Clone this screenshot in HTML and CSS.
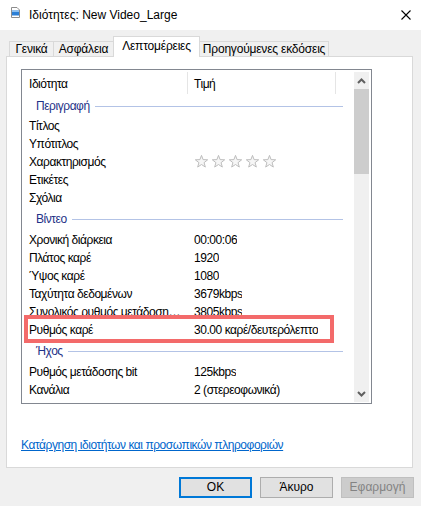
FILE: index.html
```html
<!DOCTYPE html>
<html lang="el">
<head>
<meta charset="utf-8">
<title>Ιδιότητες: New Video_Large</title>
<link rel="stylesheet" href="styles.css">
</head>
<body>
<svg class="defs" width="0" height="0">
  <defs>
    <symbol id="star" viewBox="0 0 13 13">
      <polygon points="6.5,0.4 8.09,4.62 12.68,4.79 9.07,7.63 10.32,12.06 6.5,9.5 2.68,12.06 3.93,7.63 0.32,4.79 4.91,4.62" fill="#f6f6f6" stroke="#bdbdbd" stroke-width="1" stroke-linejoin="round"/>
    </symbol>
  </defs>
</svg>
<div class="titlebar">
  <svg class="appicon" width="9" height="11" viewBox="0 0 9 11">
    <path d="M0.5 0.5h5.5l2.5 2.5v7.5h-8z" fill="#fff" stroke="#8c8c8c"/>
    <rect x="1" y="3.5" width="7" height="5" fill="#2b7fd6"/>
    <rect x="1" y="3.5" width="7" height="1.5" fill="#8cc0f0"/>
  </svg>
  <span class="title">Ιδιότητες: New Video_Large</span>
  <svg class="close" width="10" height="10" viewBox="0 0 10 10">
    <path d="M0.5 0.5L9.5 9.5M9.5 0.5L0.5 9.5" stroke="#000" stroke-width="1.1"/>
  </svg>
</div>
<div class="tabs">
  <div class="tab t1">Γενικά</div>
  <div class="tab t2">Ασφάλεια</div>
  <div class="tab t3 active">Λεπτομέρειες</div>
  <div class="tab t4">Προηγούμενες εκδόσεις</div>
</div>
<div class="panel">
  <div class="list">
    <div class="listmain">
      <div class="lhead">
        <div class="hc hname">Ιδιότητα</div>
        <div class="hc hval">Τιμή</div>
        <div class="hc hrest"></div>
      </div>
      <div class="lbody">
        <div class="group first"><span>Περιγραφή</span><i class="gline"></i></div>
        <div class="row"><span class="n">Τίτλος</span><span class="v"></span></div>
        <div class="row"><span class="n">Υπότιτλος</span><span class="v"></span></div>
        <div class="row"><span class="n">Χαρακτηρισμός</span><span class="v stars">
          <svg class="star"><use href="#star"/></svg><svg class="star"><use href="#star"/></svg><svg class="star"><use href="#star"/></svg><svg class="star"><use href="#star"/></svg><svg class="star"><use href="#star"/></svg>
        </span></div>
        <div class="row"><span class="n">Ετικέτες</span><span class="v"></span></div>
        <div class="row"><span class="n">Σχόλια</span><span class="v"></span></div>
        <div class="group"><span>Βίντεο</span><i class="gline"></i></div>
        <div class="row"><span class="n">Χρονική διάρκεια</span><span class="v">00:00:06</span></div>
        <div class="row"><span class="n">Πλάτος καρέ</span><span class="v">1920</span></div>
        <div class="row"><span class="n">Ύψος καρέ</span><span class="v">1080</span></div>
        <div class="row"><span class="n">Ταχύτητα δεδομένων</span><span class="v">3679kbps</span></div>
        <div class="row"><span class="n">Συνολικός ρυθμός μετάδοσης bit</span><span class="v">3805kbps</span></div>
        <div class="row mark"><span class="n">Ρυθμός καρέ</span><span class="v">30.00 καρέ/δευτερόλεπτο</span></div>
        <div class="group"><span>Ήχος</span><i class="gline"></i></div>
        <div class="row"><span class="n">Ρυθμός μετάδοσης bit</span><span class="v">125kbps</span></div>
        <div class="row"><span class="n">Κανάλια</span><span class="v">2 (στερεοφωνικά)</span></div>
      </div>
    </div>
    <div class="scroll">
      <div class="sbtn">
        <svg width="9" height="6" viewBox="0 0 9 6"><polyline points="1,5 4.5,1.5 8,5" fill="none" stroke="#606060" stroke-width="2"/></svg>
      </div>
      <div class="thumb"></div>
      <div class="track"></div>
      <div class="sbtn">
        <svg width="9" height="6" viewBox="0 0 9 6"><polyline points="1,1 4.5,4.5 8,1" fill="none" stroke="#606060" stroke-width="2"/></svg>
      </div>
    </div>
  </div>
  <a class="link" href="#">Κατάργηση ιδιοτήτων και προσωπικών πληροφοριών</a>
</div>
<div class="buttons">
  <button class="btn default">OK</button>
  <button class="btn">Άκυρο</button>
  <button class="btn disabled">Εφαρμογή</button>
</div>
</body>
</html>
```

FILE: styles.css
```css
*, *::before, *::after { box-sizing: border-box; }

html, body {
  margin: 0;
  padding: 0;
}

body {
  width: 421px;
  height: 506px;
  overflow: hidden;
  background: #f0f0f0;
  font-family: "Liberation Sans", Arial, sans-serif;
  font-size: 12px;
  color: #000;
}

.defs { position: absolute; width: 0; height: 0; }

/* title bar */
.titlebar {
  height: 30px;
  background: #fff;
  display: flex;
  align-items: center;
  padding-left: 11px;
}
.appicon { margin-right: 9px; margin-bottom: 5px; flex: none; }
.title { flex: 1; line-height: 16px; }
.close { margin-right: 10px; flex: none; }

/* tabs */
.tabs {
  height: 26px;
  display: flex;
  align-items: flex-end;
  padding-left: 9px;
  letter-spacing: -0.2px;
}
.tab {
  height: 15px;
  border: 1px solid #d9d9d9;
  border-bottom: none;
  margin-left: -1px;
  text-align: center;
  line-height: 14px;
  white-space: nowrap;
  background: #f0f0f0;
}
.t1 { width: 45px; margin-left: 0; }
.t2 { width: 61px; }
.t3 { width: 87px; }
.t4 { width: 130px; }
.tab.active {
  height: 21px;
  margin-bottom: -1px;
  padding-top: 2px;
  background: #fff;
  position: relative;
  z-index: 1;
}

/* panel */
.panel {
  margin-left: 6px;
  width: 407px;
  height: 412px;
  border: 1px solid #d9d9d9;
  background: #fff;
  padding: 12px 0 0 14px;
  letter-spacing: -0.45px;
}

.list {
  width: 351px;
  height: 335px;
  border: 1px solid #828790;
  display: flex;
  overflow: hidden;
  background: #fff;
}
.listmain {
  width: 332px;
  flex: none;
  overflow: hidden;
}

.lhead {
  display: flex;
  height: 24px;
  padding-top: 2px;
}
.hc {
  height: 22px;
  padding-top: 3px;
  line-height: 18px;
  white-space: nowrap;
}
.hname { width: 166px; padding-left: 7px; border-right: 1px solid #e5e5e5; }
.hval { width: 148px; padding-left: 6px; border-right: 1px solid #e5e5e5; }
.hrest { flex: 1; }

.group {
  height: 24px;
  display: flex;
  align-items: center;
  padding-left: 14px;
  padding-top: 2px;
  color: #1e3287;
  line-height: 16px;
}
.group.first { height: 22px; }
.gline {
  flex: 1;
  height: 1px;
  background: #b3c3e6;
  margin-left: 5px;
  margin-right: 11px;
}

.row {
  height: 18px;
  display: flex;
  align-items: center;
  padding-top: 2px;
  line-height: 16px;
  white-space: nowrap;
}
.row .n {
  width: 166px;
  flex: none;
  padding-left: 7px;
  padding-right: 3px;
  overflow: hidden;
  text-overflow: ellipsis;
}
.row .v {
  padding-left: 6px;
  overflow: hidden;
}
.stars { display: flex; gap: 4px; margin-top: -2px; }
.star { width: 13px; height: 13px; display: block; }
.stars .star:first-child { margin-left: 1px; }

.row.mark { position: relative; }
.row.mark::after {
  content: "";
  position: absolute;
  left: 2px;
  top: -5px;
  width: 310px;
  height: 28px;
  border: 4px solid #f36a6a;
}

/* scrollbar */
.scroll {
  width: 15px;
  flex: none;
  margin: 2px 2px 1px 0;
  background: #f0f0f0;
  display: flex;
  flex-direction: column;
}
.sbtn {
  height: 17px;
  display: flex;
  align-items: center;
  justify-content: center;
}
.thumb { height: 85px; background: #cdcdcd; }
.track { flex: 1; }

/* link */
.link {
  display: inline-block;
  margin-top: 33px;
  color: #0066cc;
  text-decoration: underline;
  line-height: 16px;
}

/* buttons */
.buttons {
  display: flex;
  justify-content: flex-end;
  gap: 8px;
  padding-right: 7px;
  margin-top: 9px;
}
.btn {
  width: 73px;
  height: 21px;
  padding: 0;
  border: 1px solid #adadad;
  background: #e1e1e1;
  font: inherit;
  color: #000;
  text-align: center;
  line-height: 19px;
}
.btn.default { border: 2px solid #0078d7; line-height: 17px; }
.btn.disabled { background: #cccccc; border-color: #bfbfbf; color: #838383; }
```
